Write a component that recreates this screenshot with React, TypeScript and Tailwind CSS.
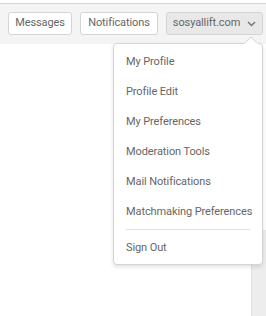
import React from "react";

const menuItems = [
  "My Profile",
  "Profile Edit",
  "My Preferences",
  "Moderation Tools",
  "Mail Notifications",
  "Matchmaking Preferences",
];

const ChevronDown = () => (
  <svg width="9" height="6" viewBox="0 0 9 6" className="ml-[7px]">
    <path d="M1 1 L4.5 4.5 L8 1" fill="none" stroke="#777" strokeWidth="1.5" />
  </svg>
);

export default function App() {
  return (
    <div
      className="relative h-[316px] w-[266px] overflow-hidden bg-white text-[11px] tracking-[-0.1px] text-[#666]"
      style={{ fontFamily: "Roboto, 'Liberation Sans', sans-serif" }}
    >
      <div className="mt-[3px] h-px bg-[#d6d6d6]" />
      <div className="flex h-[40px] gap-[8px] bg-[#f4f4f4] pl-[8px] pt-[8px]">
        <button className="flex h-[23px] w-[64px] items-center justify-center rounded-[3px] border border-[#d4d4d4] bg-white">
          Messages
        </button>
        <button className="flex h-[23px] w-[78px] items-center justify-center rounded-[3px] border border-[#d4d4d4] bg-white">
          Notifications
        </button>
        <button className="flex h-[23px] w-[97px] items-center justify-center rounded-[3px] border border-[#d4d4d4] bg-[#e8e8e8]">
          sosyallift.com
          <ChevronDown />
        </button>
      </div>

      <div className="flex justify-end">
        <div className="mt-[186px] h-[120px] w-[15px] border-l border-[#e0e0e0] bg-[#ededed]" />
      </div>

      <div className="absolute left-[113px] top-[43px] w-[150px] rounded-[4px] border border-[#d4d4d4] bg-white pb-[1px] pt-[3px] shadow-[0_2px_4px_rgba(0,0,0,0.12)]">
        <svg
          width="14"
          height="7"
          viewBox="0 0 14 7"
          className="absolute right-[4px] top-[-7px]"
        >
          <path d="M0 7 L7 0 L14 7" fill="#fff" stroke="#d4d4d4" strokeWidth="1" />
          <rect x="0" y="6.5" width="14" height="1" fill="#fff" />
        </svg>
        {menuItems.map((item) => (
          <div key={item} className="flex h-[30px] items-center pl-[12px]">
            {item}
          </div>
        ))}
        <div className="mx-[12px] mb-[3px] mt-[2px] h-px bg-[#e0e0e0]" />
        <div className="flex h-[30px] items-center pl-[12px]">Sign Out</div>
      </div>
    </div>
  );
}
